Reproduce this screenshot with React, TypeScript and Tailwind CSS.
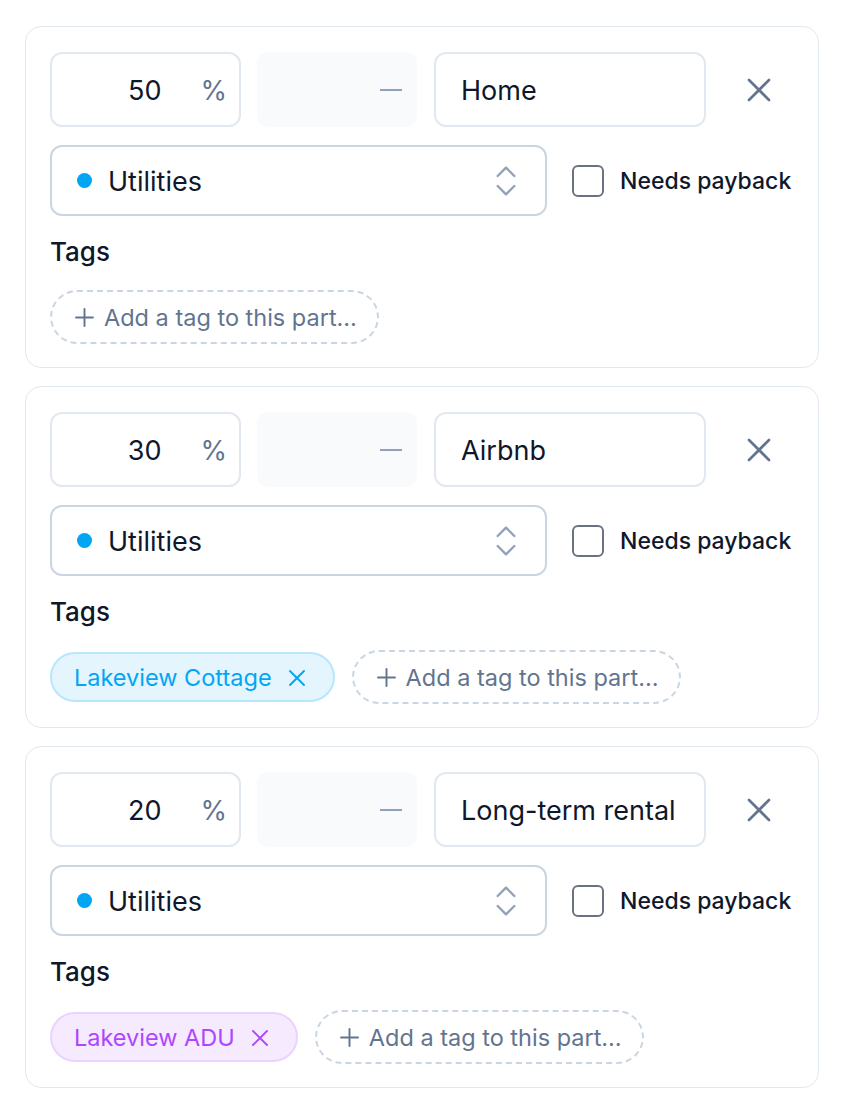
import React from 'react';

type Part = {
  percent: number;
  name: string;
  tag?: { label: string; tone: 'sky' | 'purple' };
};

const parts: Part[] = [
  { percent: 50, name: 'Home' },
  { percent: 30, name: 'Airbnb', tag: { label: 'Lakeview Cottage', tone: 'sky' } },
  { percent: 20, name: 'Long-term rental', tag: { label: 'Lakeview ADU', tone: 'purple' } },
];

const XIcon: React.FC<{ className?: string; sw?: number }> = ({ className, sw = 2 }) => (
  <svg viewBox="0 0 24 24" fill="none" stroke="currentColor" strokeWidth={sw} strokeLinecap="round" className={className}>
    <path d="M18 6 6 18" />
    <path d="m6 6 12 12" />
  </svg>
);

const ChevronsUpDown: React.FC<{ className?: string }> = ({ className }) => (
  <svg viewBox="0 0 24 24" fill="none" stroke="currentColor" strokeWidth={1.4} strokeLinecap="round" strokeLinejoin="round" className={className}>
    <path d="m7 15 5 5 5-5" />
    <path d="m7 9 5-5 5 5" />
  </svg>
);

const PlusIcon: React.FC<{ className?: string }> = ({ className }) => (
  <svg viewBox="0 0 24 24" fill="none" stroke="currentColor" strokeWidth={1.6} strokeLinecap="round" className={className}>
    <path d="M5 12h14" />
    <path d="M12 5v14" />
  </svg>
);

const TagChip: React.FC<{ label: string; tone: 'sky' | 'purple' }> = ({ label, tone }) => (
  <span
    className={
      tone === 'sky'
        ? 'flex items-center h-[50px] pl-[22px] pr-[22px] pt-[2px] rounded-full border-2 border-sky-200 bg-[#e4f5fd] text-sky-500 text-[23.5px]'
        : 'flex items-center h-[50px] pl-[22px] pr-[22px] pt-[2px] rounded-full border-2 border-purple-200 bg-[#f5eafe] text-purple-500 text-[23.5px]'
    }
  >
    {label}
    <XIcon className="w-[28px] h-[28px] ml-[11px]" sw={1.6} />
  </span>
);

const PartCard: React.FC<{ part: Part }> = ({ part }) => (
  <div className="border border-slate-200 rounded-2xl bg-white pt-[25px] pb-[23px] px-[24px]">
    <div className="flex items-center">
      <div className="w-[191px] h-[75px] rounded-xl border-2 border-slate-200 flex items-center justify-end pr-[12px] pt-[3px] text-[27px]">
        <span className="text-slate-900">{part.percent}</span>
        <span className="text-slate-500 ml-[39px]">%</span>
      </div>
      <div className="w-[160px] h-[75px] ml-[16px] rounded-xl bg-slate-50 flex items-center justify-end pr-[15px]">
        <span className="block w-[22px] h-[2px] bg-slate-400" />
      </div>
      <div className="w-[272px] h-[75px] ml-[17px] rounded-xl border-2 border-slate-200 flex items-center pl-[25px] pt-[3px] text-[27px] text-slate-900">
        {part.name}
      </div>
      <button className="ml-[33px] text-slate-500">
        <XIcon className="w-[40px] h-[40px]" sw={1.6} />
      </button>
    </div>

    <div className="flex items-center mt-[18px]">
      <div className="w-[497px] h-[71px] rounded-xl border-2 border-slate-300 flex items-center pl-[25px] pr-[19px]">
        <span className="w-[15px] h-[15px] rounded-full bg-sky-500" />
        <span className="ml-[16px] pt-[3px] text-[27px] text-slate-900">Utilities</span>
        <ChevronsUpDown className="ml-auto w-[40px] h-[40px] text-slate-400" />
      </div>
      <span className="ml-[25px] w-[32px] h-[32px] rounded-md border-2 border-gray-500" />
      <span className="ml-[16px] pt-[1px] text-[23px] font-medium text-slate-900">Needs payback</span>
    </div>

    <div className="mt-[20px] text-[26px] leading-[32px] font-medium text-slate-900">Tags</div>

    <div className="flex items-center gap-[17px] mt-[22px]">
      {part.tag && <TagChip label={part.tag.label} tone={part.tag.tone} />}
      <button className="flex items-center h-[54px] pl-[18px] pr-[20px] pt-[1px] rounded-full border-2 border-dashed border-slate-300 text-[23.5px] text-slate-500">
        <PlusIcon className="w-[29px] h-[29px] mr-[5px]" />
        Add a tag to this part…
      </button>
    </div>
  </div>
);

export default function App() {
  return (
    <div className="min-h-screen bg-white pt-[26px] px-[25px]" style={{ fontFamily: 'Inter, "Noto Sans", sans-serif' }}>
      <div className="flex flex-col gap-[18px]">
        {parts.map((p) => (
          <PartCard key={p.name} part={p} />
        ))}
      </div>
    </div>
  );
}
